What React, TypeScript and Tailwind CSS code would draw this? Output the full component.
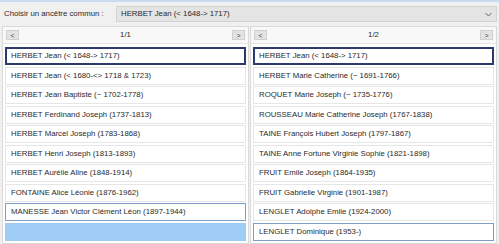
import React from "react";

type V = "sel" | "hl" | "blue" | "n";
const left: [string, V][] = [
  ["HERBET Jean (< 1648-> 1717)", "sel"],
  ["HERBET Jean (< 1680-<> 1718 & 1723)", "n"],
  ["HERBET Jean Baptiste (~ 1702-1778)", "n"],
  ["HERBET Ferdinand Joseph (1737-1813)", "n"],
  ["HERBET Marcel Joseph (1783-1868)", "n"],
  ["HERBET Henri Joseph (1813-1893)", "n"],
  ["HERBET Aurélie Aline (1848-1914)", "n"],
  ["FONTAINE Alice Léonie (1876-1962)", "n"],
  ["MANESSE Jean Victor Clément Léon (1897-1944)", "hl"],
  ["", "blue"],
];
const right: [string, V][] = [
  ["HERBET Jean (< 1648-> 1717)", "sel"],
  ["HERBET Marie Catherine (~ 1691-1766)", "n"],
  ["ROQUET Marie Joseph (~ 1735-1776)", "n"],
  ["ROUSSEAU Marie Catherine Joseph (1767-1838)", "n"],
  ["TAINE François Hubert Joseph (1797-1867)", "n"],
  ["TAINE Anne Fortune Virginie Sophie (1821-1898)", "n"],
  ["FRUIT Emile Joseph (1864-1935)", "n"],
  ["FRUIT Gabrielle Virginie (1901-1987)", "n"],
  ["LENGLET Adolphe Emile (1924-2000)", "n"],
  ["LENGLET Dominique (1953-)", "hl"],
];

function Row({ text, v }: { text: string; v: V }) {
  const cls =
    v === "sel"
      ? "border-2 border-[#2d3a6b] bg-white pl-[4px]"
      : v === "hl"
      ? "border border-[#7f9dc7] bg-white pl-[5px]"
      : v === "blue"
      ? "border border-[#9dcbf5] bg-[#9fcdf7] pl-[5px]"
      : "border border-[#e6e6e6] bg-white pl-[5px]";
  return (
    <div className={`h-[18px] flex items-center whitespace-nowrap overflow-hidden ${cls}`}>
      {text}
    </div>
  );
}

function Btn({ c }: { c: string }) {
  return (
    <div className="w-[13px] h-[10px] bg-[#e3e3e3] border border-[#d0d0d0] flex items-center justify-center text-[7px] leading-none text-[#444]">
      {c}
    </div>
  );
}

function Panel({ page, rows }: { page: string; rows: [string, V][] }) {
  return (
    <div className="flex-1 border border-[#dadada] bg-white flex flex-col">
      <div className="h-[17px] flex items-center justify-between px-[3px] bg-[#f8f8f8] border-b border-[#e6e6e6]">
        <Btn c="<" />
        <span>{page}</span>
        <Btn c=">" />
      </div>
      <div className="flex flex-col gap-[1.5px] px-[2px] pt-[3px]">
        {rows.map(([t, v], i) => (
          <Row key={i} text={t} v={v} />
        ))}
      </div>
    </div>
  );
}

export default function App() {
  return (
    <div
      className="w-[499px] h-[244px] overflow-hidden bg-[#f0f0f0] text-[7.8px] text-[#2a2a2a] flex flex-col"
      style={{ fontFamily: '"Liberation Sans", Arial, sans-serif' }}
    >
      <div className="h-[26px] border-t-2 border-[#c9dcef] flex items-center pl-[4px] pr-[2px] shrink-0">
        <span className="w-[112px]">Choisir un ancêtre commun :</span>
        <div className="flex-1 h-[16px] bg-[#e4e4e4] border border-[#d2d2d2] flex items-center justify-between pl-[4px] pr-[4px]">
          <span>HERBET Jean (&lt; 1648-&gt; 1717)</span>
          <svg width="7" height="5" viewBox="0 0 7 5">
            <path d="M0.5 1 L3.5 4 L6.5 1" stroke="#666" strokeWidth="1" fill="none" />
          </svg>
        </div>
      </div>
      <div className="flex-1 flex gap-[1px] px-[2px] pb-0">
        <Panel page="1/1" rows={left} />
        <Panel page="1/2" rows={right} />
      </div>
    </div>
  );
}
